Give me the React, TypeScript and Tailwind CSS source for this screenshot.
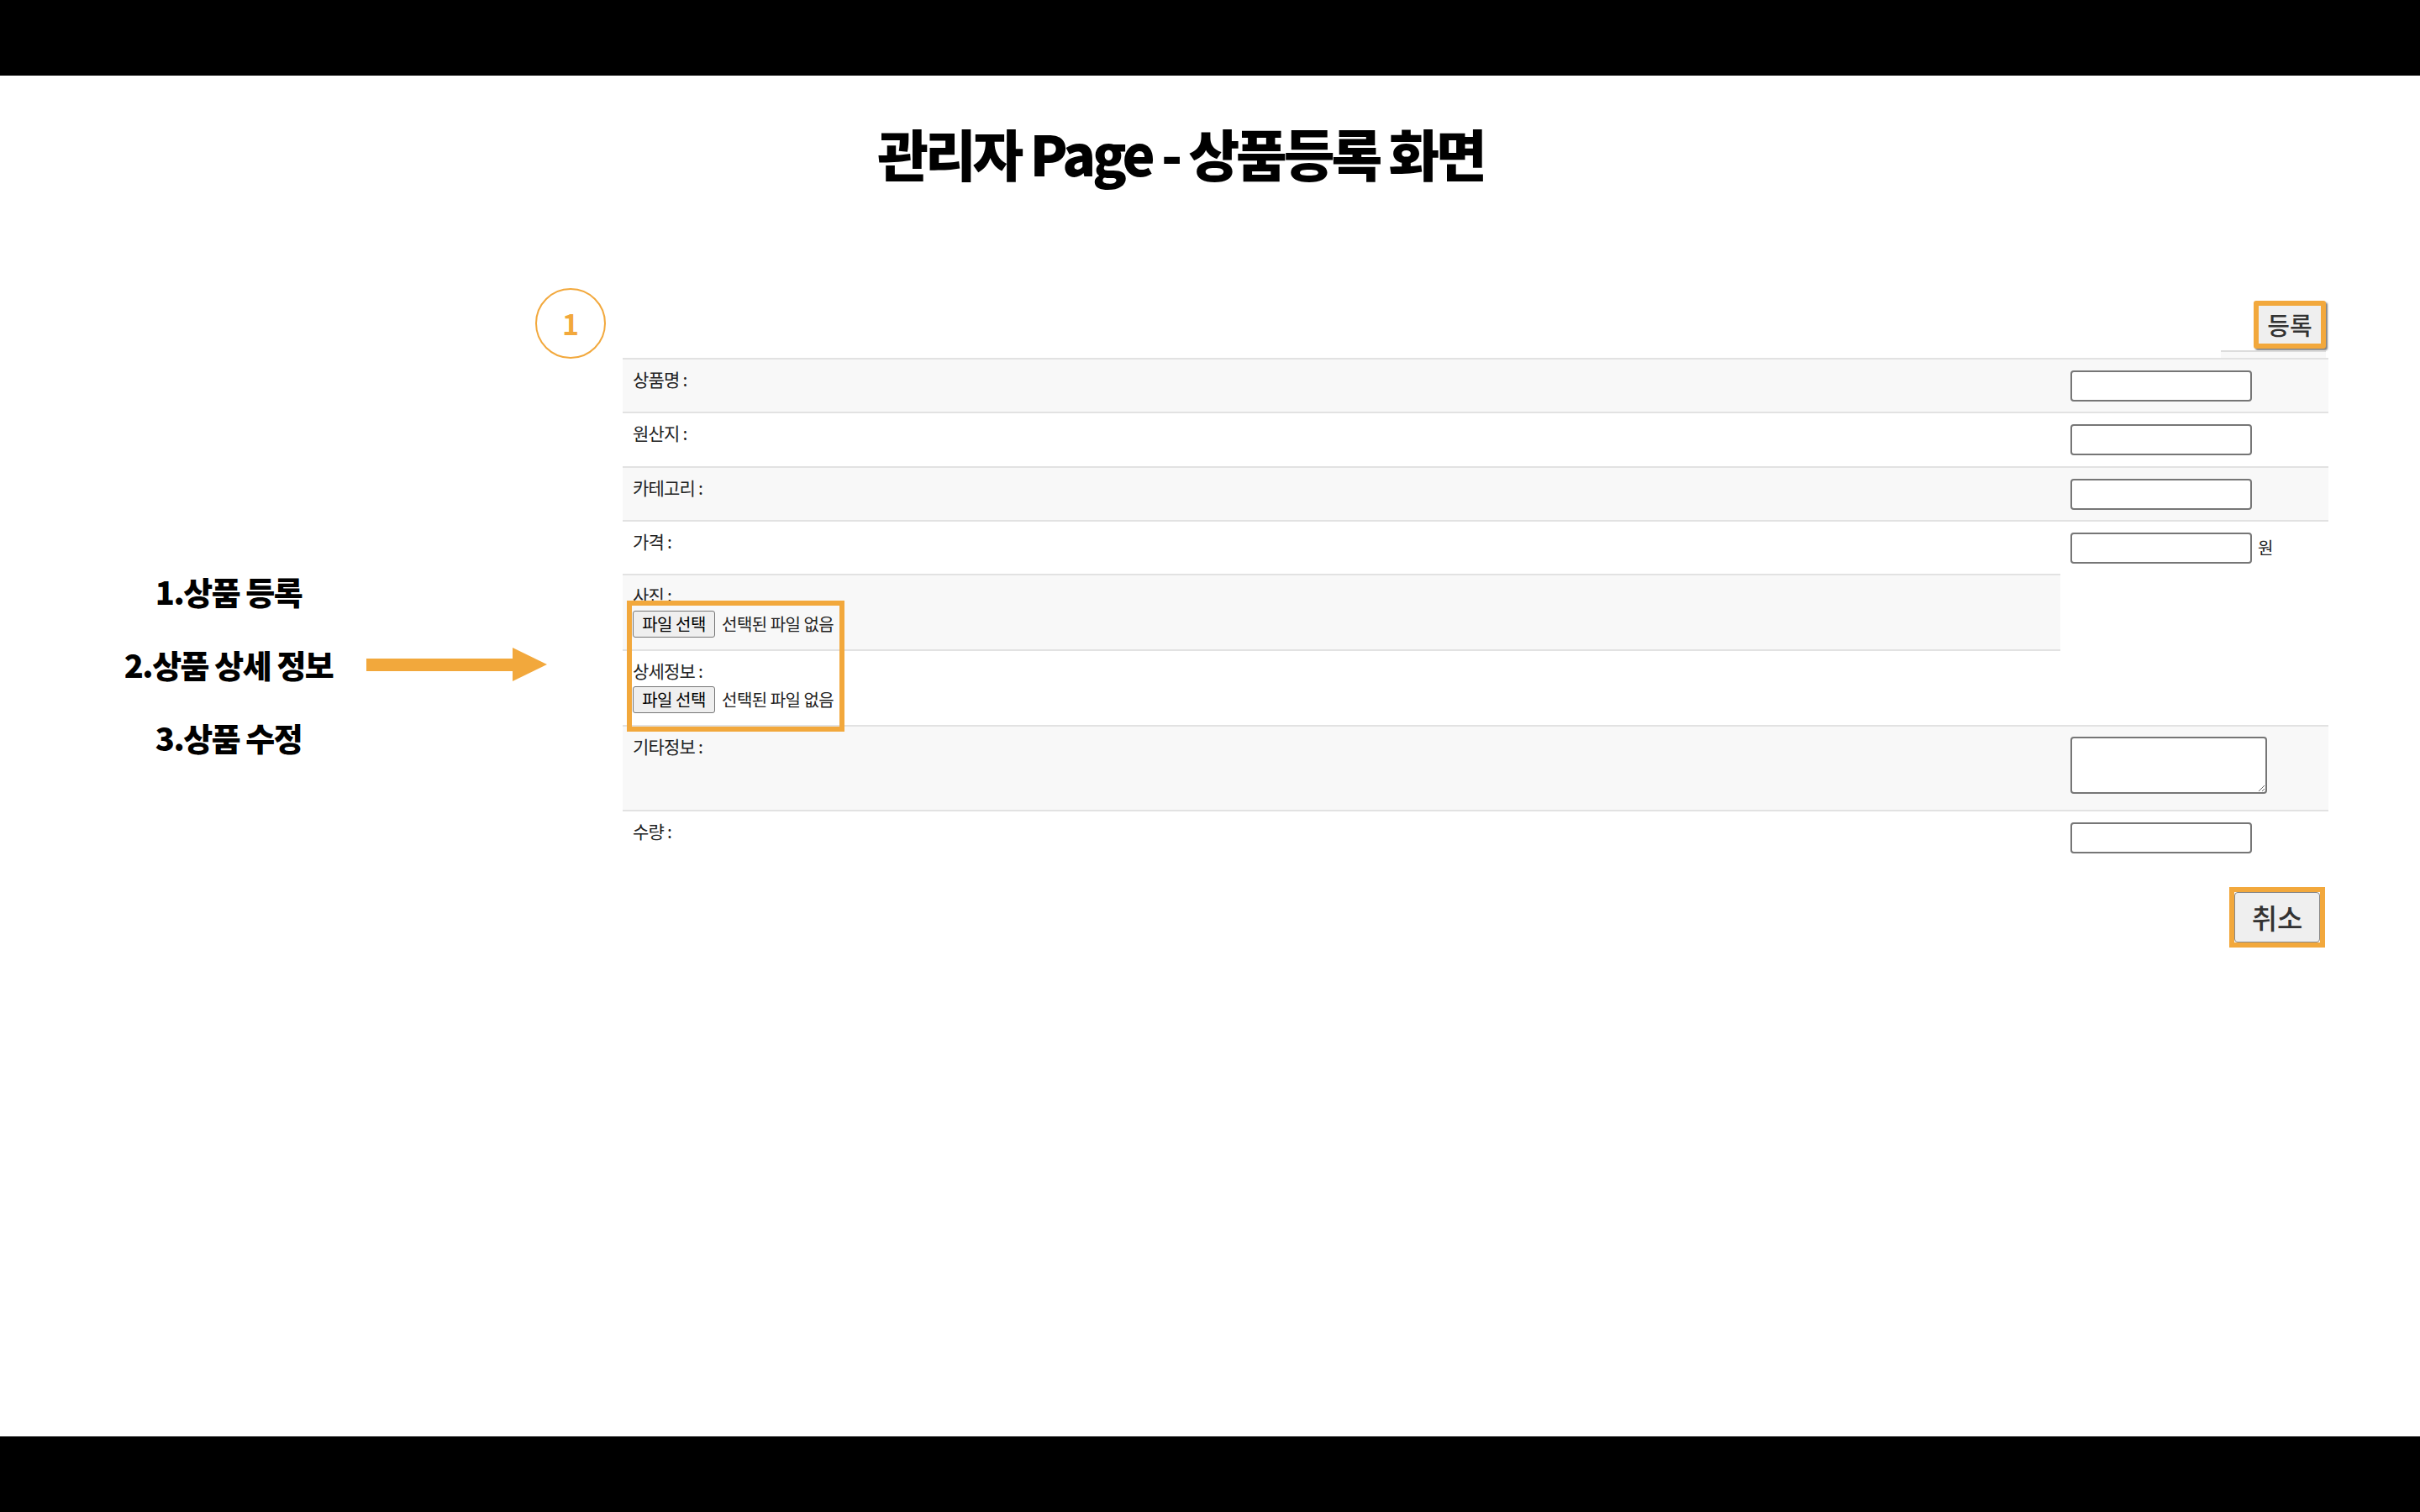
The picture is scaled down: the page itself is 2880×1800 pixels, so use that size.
import React from "react";

const ORANGE = "#f2a83c";

function TextInput() {
  return (
    <input
      type="text"
      className="w-[216px] h-[37px] border-2 border-[#767676] rounded-[4px] bg-white outline-none"
    />
  );
}

function FileInput() {
  return (
    <div className="flex items-center mt-[7px]">
      <div className="w-[98px] h-[32px] border border-[#767676] rounded-[3px] bg-[#efefef] flex items-center justify-center text-[20px] leading-none text-black tracking-[-0.5px]">
        파일 선택
      </div>
      <span className="ml-[8px] text-[20px] leading-none text-[#222] tracking-[-0.5px]">선택된 파일 없음</span>
    </div>
  );
}

type RowProps = {
  h: string;
  bg: string;
  label: string;
  right?: React.ReactNode;
  rightEmpty?: boolean;
  file?: boolean;
  rightTop?: boolean;
};

function Row({ h, bg, label, right, rightEmpty, file, rightTop }: RowProps) {
  return (
    <div className={`flex ${h}`}>
      <div className={`w-[1711px] shrink-0 border-t-2 border-[#e2e2e2] ${bg} pl-[12px] pt-[11px]`}>
        <div className="text-[21px] leading-[24px] text-[#222] tracking-[-0.8px]">{label}</div>
        {file ? <FileInput /> : null}
      </div>
      {rightEmpty ? (
        <div className="flex-1 bg-white" />
      ) : (
        <div
          className={`flex-1 border-t-2 border-[#e2e2e2] ${bg} pl-[12px] flex ${rightTop ? "items-start pt-[12px]" : "items-center"}`}
        >
          {right}
        </div>
      )}
    </div>
  );
}

export default function App() {
  return (
    <div className="w-[2880px] h-[1800px] flex flex-col bg-white font-['Noto_Sans_CJK_KR','Noto_Sans',sans-serif] overflow-hidden">
      <div className="h-[90px] bg-black shrink-0" />
      <main className="h-[1620px] shrink-0 flex flex-col">
        <div className="pt-[58px] flex justify-center pr-[70px]">
          <h1 className="text-[66px] leading-[66px] font-black text-black tracking-[-4px] whitespace-nowrap">
            관리자 Page - 상품등록 화면
          </h1>
        </div>
        <div className="flex mt-[129px]">
          {/* left panel */}
          <div className="w-[637px] shrink-0 pt-[317px] flex flex-col">
            <div className="h-[87px] flex items-center">
              <div className="w-[436px] shrink-0 pl-[108px] text-center text-[38px] font-black text-black tracking-[-1.5px] whitespace-nowrap">
                1.상품 등록
              </div>
            </div>
            <div className="h-[87px] flex items-center">
              <div className="w-[436px] shrink-0 pl-[108px] text-center text-[38px] font-black text-black tracking-[-1.5px] whitespace-nowrap">
                2.상품 상세 정보
              </div>
              <svg width="215" height="40" viewBox="0 0 215 40" className="shrink-0">
                <rect x="0" y="13" width="175" height="15" fill={ORANGE} />
                <polygon points="174,0 215,20 174,40" fill={ORANGE} />
              </svg>
            </div>
            <div className="h-[87px] flex items-center">
              <div className="w-[436px] shrink-0 pl-[108px] text-center text-[38px] font-black text-black tracking-[-1.5px] whitespace-nowrap">
                3.상품 수정
              </div>
            </div>
          </div>

          {/* form panel */}
          <div className="w-[2134px] shrink-0 flex flex-col">
            <div className="h-[83px] flex justify-between items-start">
              <div className="w-[84px] h-[84px] rounded-full border-[2.5px] border-[#f2a83c] flex items-center justify-center text-[34px] font-bold text-[#f2a83c] leading-none">
                1
              </div>
              <div className="flex flex-col items-end mr-[3px]">
                <button className="mt-[15px] w-[86px] h-[57px] bg-[#efefef] border-[6px] border-[#f2a83c] rounded-[3px] shadow-[2px_2px_2px_rgba(0,0,0,0.5)] text-[29px] leading-none font-medium text-[#333] flex items-center justify-center">
                  등록
                </button>
                <div className="mt-[2px] w-[125px] h-[9px] border-t-2 border-[#dcdcdc] bg-[#f8f8f8]" />
              </div>
            </div>

            <div className="ml-[104px] w-[2030px] flex flex-col">
              <Row h="h-[64px]" bg="bg-[#f8f8f8]" label="상품명 :" right={<TextInput />} />
              <Row h="h-[65px]" bg="bg-white" label="원산지 :" right={<TextInput />} />
              <Row h="h-[64px]" bg="bg-[#f8f8f8]" label="카테고리 :" right={<TextInput />} />
              <Row
                h="h-[64px]"
                bg="bg-white"
                label="가격 :"
                right={
                  <div className="flex items-center">
                    <TextInput />
                    <span className="ml-[7px] text-[20px] text-[#222]">원</span>
                  </div>
                }
              />
              <div className="relative">
                <Row h="h-[90px]" bg="bg-[#f8f8f8]" label="사진 :" file rightEmpty />
                <Row h="h-[90px]" bg="bg-white" label="상세정보 :" file rightEmpty />
                <div className="absolute left-[5px] top-[32px] w-[259px] h-[156px] border-[6px] border-[#f2a83c] pointer-events-none" />
              </div>
              <Row
                h="h-[101px]"
                bg="bg-[#f8f8f8]"
                label="기타정보 :"
                rightTop
                right={
                  <textarea className="w-[234px] h-[68px] border-2 border-[#767676] rounded-[4px] bg-white outline-none" />
                }
              />
              <Row h="h-[64px]" bg="bg-white" label="수량 :" right={<TextInput />} />
            </div>

            <div className="self-end mr-[4px] mt-[28px] w-[114px] h-[72px] border-[6px] border-[#f2a83c] flex">
              <button className="flex-1 bg-[#efefef] border-[1.5px] border-[#888] rounded-[4px] text-[33px] leading-none font-medium text-[#333] flex items-center justify-center">
                취소
              </button>
            </div>
          </div>
        </div>
      </main>
      <div className="h-[90px] bg-black shrink-0" />
    </div>
  );
}
